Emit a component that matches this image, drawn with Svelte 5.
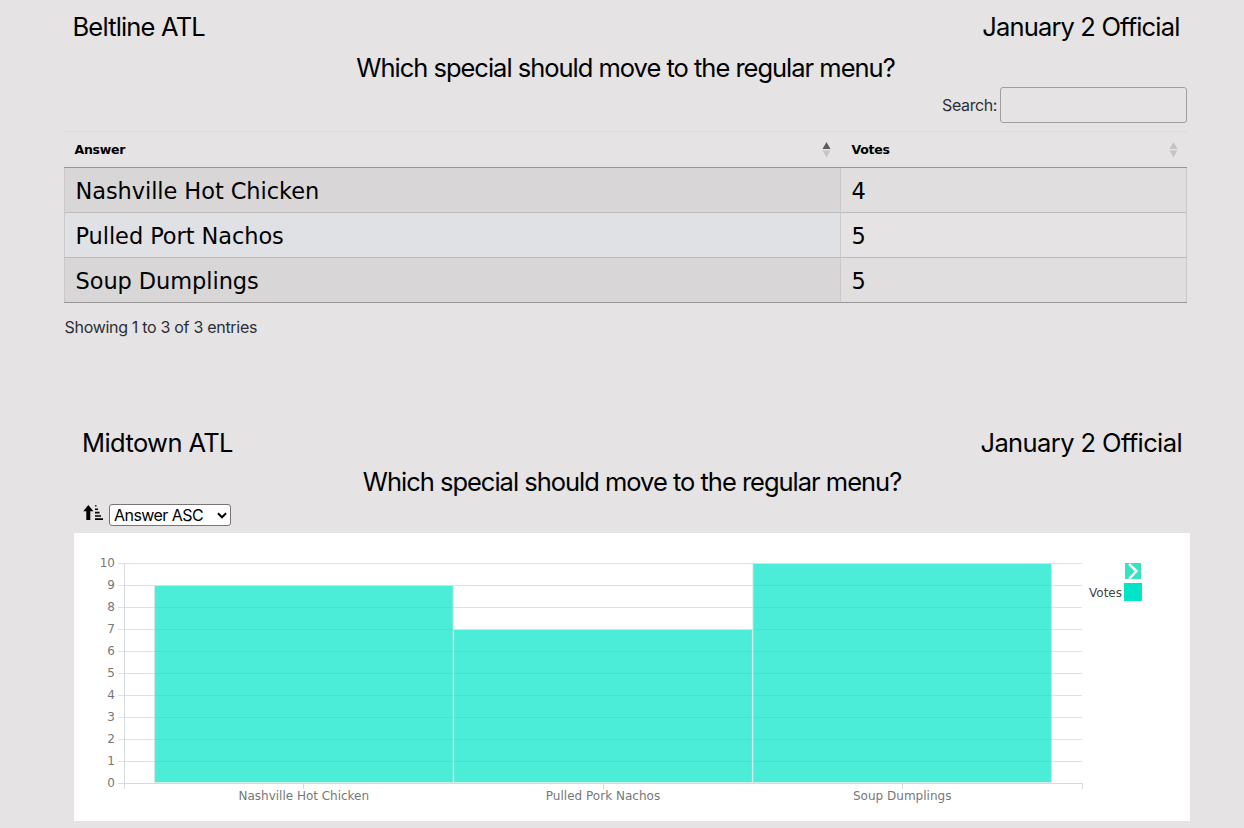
<script>
  const rows = [
    { answer: 'Nashville Hot Chicken', votes: 4 },
    { answer: 'Pulled Port Nachos', votes: 5 },
    { answer: 'Soup Dumplings', votes: 5 }
  ];
  const bars = [
    { label: 'Nashville Hot Chicken', votes: 9, width: 130.5 },
    { label: 'Pulled Pork Nachos', votes: 7, width: 114.5 },
    { label: 'Soup Dumplings', votes: 10, width: 98.5 }
  ];
  const ticks = [0, 1, 2, 3, 4, 5, 6, 7, 8, 9, 10];
  const y = (v) => 250 - v * 22;
</script>

<main>
  <section class="poll">
    <header class="head"><h2 class="b">Beltline ATL</h2><h2 class="d">January 2 Official</h2></header>
    <h2 class="question">Which special should move to the regular menu?</h2>
    <label class="search"><span>Search:</span><input type="search" /></label>
    <div class="table">
      <div class="tr th">
        <div class="cell"><span>Answer</span>
          <svg class="sort" width="9" height="16" viewBox="0 0 9 16"><path d="M.5 7 4.500 0l4 7z" fill="#5d5d5d" /><path d="M.5 8.500 4.500 15.500l4-7z" fill="#c5c4c5" /></svg>
        </div>
        <div class="cell"><span>Votes</span>
          <svg class="sort" width="9" height="16" viewBox="0 0 9 16"><path d="M.5 7 4.500 0l4 7z" fill="#c5c4c5" /><path d="M.5 8.500 4.500 15.500l4-7z" fill="#c5c4c5" /></svg>
        </div>
      </div>
      {#each rows as r, i}
        <div class="tr td" class:odd={i % 2 === 0}>
          <div class="cell"><span>{r.answer}</span></div>
          <div class="cell"><span>{r.votes}</span></div>
        </div>
      {/each}
    </div>
    <p class="info"><span>Showing 1 to 3 of 3 entries</span></p>
  </section>

  <section class="chart-poll">
    <header class="head"><h2>Midtown ATL</h2><h2>January 2 Official</h2></header>
    <h2 class="question q2">Which special should move to the regular menu?</h2>
    <div class="tools">
      <svg width="20" height="16" viewBox="0 0 20 16">
        <path d="M5.300 0 10.500 6.200H7.300V15H3.300V6.200H.3z" />
        <path d="M12 .3h1.500v1.200h-1.500zM12 3.400h3v1.500h-3zM12 6.800h4.500v1.600h-4.500zM12 10.200h6v1.500h-6zM12 13.300h8V15h-8z" />
      </svg>
      <button class="select"><span>Answer ASC</span>
        <svg width="10" height="7" viewBox="0 0 10 7"><path d="m1 1.300 4 4 4-4" fill="none" stroke="#000" stroke-width="2" /></svg>
      </button>
    </div>
    <svg class="chart" width="1116" height="288" viewBox="0 0 1116 288">
      {#each ticks as t}
        <path d="M44 {y(t) + 0.5}H1008" stroke={t === 0 ? '#d5dbdf' : '#dfe1e2'} />
        <text class="tick" x="41" y={y(t) + 4} text-anchor="end">{t}</text>
      {/each}
      <path d="M50.500 30V256M1008.500 250v6M229.500 250v6M529.500 250v6M828.500 250v6" stroke="#d5dbdf" />
      {#each bars as b, i}
        <rect x={80.5 + i * 299.2} y={y(b.votes) + 0.5} width="298.700" height={b.votes * 22 - 1} fill="#00e5c7" fill-opacity=".7" stroke="#dfe5e6" stroke-opacity=".75" />
        <text class="tick" x={229.8 + i * 299.2} y="267" text-anchor="middle" textLength={b.width}>{b.label}</text>
      {/each}
      <rect x="1051" y="30" width="16" height="16" fill="#33e4bf" />
      <path d="m1055 31 7.500 7-7.500 8" fill="none" stroke="#fff" stroke-width="2.500" />
      <text class="legend" x="1015" y="64" textLength="33">Votes</text>
      <rect x="1050" y="50" width="18" height="18" fill="#00e5c7" />
    </svg>
  </section>
</main>

<style>
  :global(body) { background: #e5e3e4; }
  main { width: 1244px; height: 828px; overflow: hidden; font-family: Inter, sans-serif; color: #000; box-sizing: border-box; padding-top: 7px; }
  h2 { margin: 0; font-size: 25.500px; font-weight: 400; line-height: 40px; white-space: nowrap; letter-spacing: -0.600px; font-feature-settings: "calt" 0; }
  .poll { width: 1123px; margin-left: 64px; height: 416px; }
  .head { display: flex; justify-content: space-between; height: 41px; padding: 0 7.500px 0 8.500px; }
  .b { letter-spacing: -0.820px; }
  .d { letter-spacing: -0.840px; }
  .question { text-align: center; height: 39px; letter-spacing: -1.010px; }
  .search { display: flex; justify-content: flex-end; align-items: center; gap: 3px; height: 36px; font-size: 16px; letter-spacing: -0.400px; color: #2c3035; }
  .search input { box-sizing: border-box; width: 187px; height: 36px; border: 1px solid #a09fa0; border-radius: 3px; background: transparent; padding: 5px; outline: none; }
  .table { margin-top: 8px; border-top: 1px solid #dcdddf; border-bottom: 1px solid #989798; font-family: "DejaVu Sans", Verdana, sans-serif; }
  .tr { display: grid; grid-template-columns: 776px 1fr; }
  .cell { display: flex; align-items: center; justify-content: space-between; box-sizing: border-box; }
  .th { height: 36px; border-bottom: 1px solid #989798; box-sizing: border-box; font-size: 12.500px; font-weight: 700; letter-spacing: -0.250px; }
  .th .cell { padding: 0 9px 0 10.500px; }
  .th .cell:last-child { padding-left: 11.500px; }
  .td .cell { height: 45px; padding: 2px 10px 0 10.500px; font-size: 22.500px; letter-spacing: -0.080px; border-left: 1px solid #ccc9cb; border-top: 1px solid #bebdbe; }
  .td .cell:last-child { border-right: 1px solid #ccc9cb; }
  .td:nth-child(2) .cell { height: 44px; border-top: 0; }
  .td .cell:first-child { background: #dfe1e5; }
  .td.odd .cell { background: #e0dedf; }
  .td.odd .cell:first-child { background: #d8d6d7; }
  .info { margin: 14px 0 0; padding-left: .5px; font-size: 16px; line-height: 20px; letter-spacing: -0.300px; color: #2c3035; }
  .chart-poll { width: 1116px; margin-left: 74px; }
  .chart-poll .head { height: 39px; padding: 0 8px; }
  .q2 { height: 41px; }
  .tools { display: flex; align-items: flex-start; gap: 6px; height: 30px; padding: 1px 0 0 9px; box-sizing: border-box; }
  .tools > svg { margin-top: 1px; }
  .select { display: flex; justify-content: space-between; align-items: center; box-sizing: border-box; width: 122px; height: 22px; padding: 0 3px 0 4px; border: 1px solid #767676; border-radius: 3px; background: #fff; font: 16px Inter, sans-serif; letter-spacing: -0.550px; color: #000; white-space: nowrap; }
  .chart { display: block; background: #fff; }
  .tick, .legend { font: 12px "DejaVu Sans", Verdana, sans-serif; fill: #777; }
  .legend { fill: #444; }
</style>
